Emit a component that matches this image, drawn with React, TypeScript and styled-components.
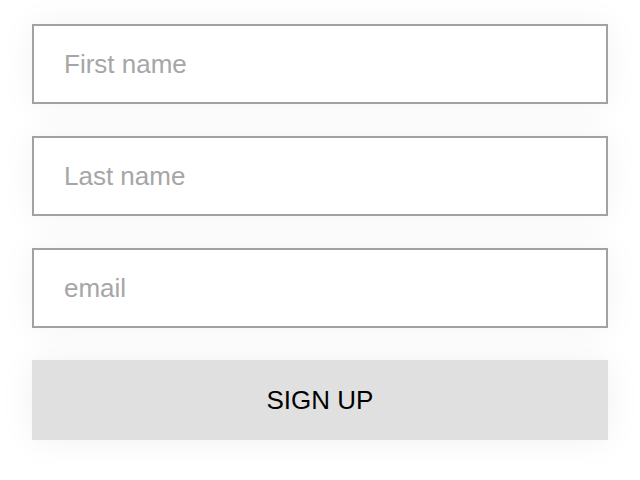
import React from "react";
import styled, { createGlobalStyle } from "styled-components";

const Global = createGlobalStyle`
  html, body { margin: 0; padding: 0; background: #ffffff; }
  body { font-family: "Liberation Sans", Arial, sans-serif; }
  * { box-sizing: border-box; }
`;

const Form = styled.form`
  display: flex;
  flex-direction: column;
  gap: 32px;
  padding: 24px 32px;
  width: 640px;
`;

const Input = styled.input`
  display: block;
  width: 576px;
  height: 80px;
  margin: 0;
  padding: 0 30px;
  border: 2px solid #a2a2a6;
  border-radius: 0;
  background: #ffffff;
  font-family: "Liberation Sans", Arial, sans-serif;
  font-size: 26px;
  color: #333;
  outline: none;
  box-shadow: 0 0 36px rgba(0, 0, 0, 0.05);
  &::placeholder {
    color: #a6a6a6;
  }
`;

const Button = styled.button`
  display: block;
  width: 576px;
  height: 80px;
  margin: 0;
  padding: 0;
  border: none;
  border-radius: 0;
  background: #e0e0e0;
  color: #000;
  font-family: "Liberation Sans", Arial, sans-serif;
  font-size: 26px;
  text-transform: uppercase;
  box-shadow: 0 0 36px rgba(0, 0, 0, 0.06);
  cursor: pointer;
`;

export default function App() {
  return (
    <>
      <Global />
      <Form onSubmit={(e) => e.preventDefault()}>
        <Input type="text" placeholder="First name" />
        <Input type="text" placeholder="Last name" />
        <Input type="email" placeholder="email" />
        <Button type="submit">Sign up</Button>
      </Form>
    </>
  );
}
